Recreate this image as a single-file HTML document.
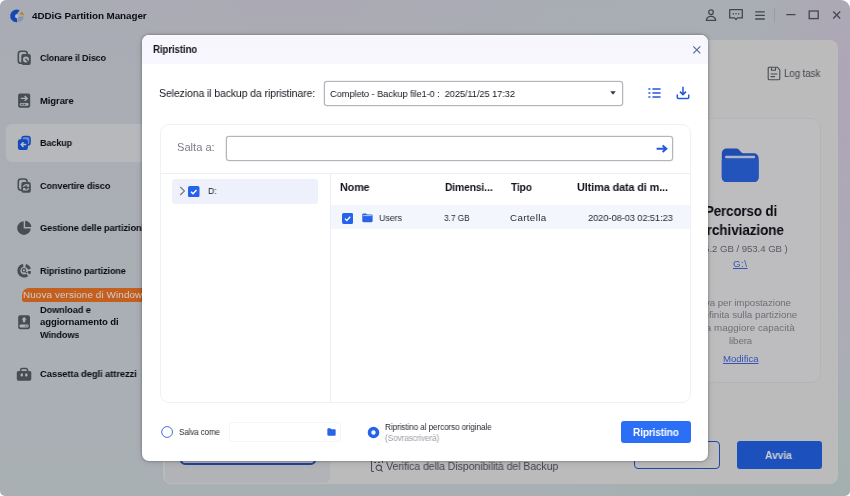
<!DOCTYPE html>
<html lang="it">
<head>
<meta charset="utf-8">
<title>4DDiG Partition Manager</title>
<style>
*{box-sizing:border-box;margin:0;padding:0}
html,body{width:850px;height:496px;overflow:hidden;background:#fff}
body{font-family:"Liberation Sans",sans-serif;color:#1c1e26;position:relative}
.abs{position:absolute}
#app{position:absolute;left:0;top:0;width:850px;height:496px;border-radius:6px 9px 5px 5px;overflow:hidden;
 background:radial-gradient(ellipse 190px 55px at 690px 8px,rgba(206,224,221,.4) 0%,rgba(206,224,221,0) 100%),radial-gradient(ellipse 280px 60px at 300px 6px,rgba(217,210,226,.45) 0%,rgba(217,210,226,0) 100%),radial-gradient(ellipse 110px 330px at 100% 22%,#dbcfe5 0%,rgba(219,207,229,0) 100%),radial-gradient(ellipse 330px 150px at 92% 100%,#ccdcdb 0%,rgba(204,220,219,0) 100%),linear-gradient(180deg,#d4d7e1 0%,#d5dae2 30%,#d4dce2 100%)}
.navsel{left:6px;top:124px;width:170px;height:37.500px;border-radius:6px;background:rgba(255,255,255,.36)}
.ico{position:absolute}
#panel{left:163px;top:40px;width:675px;height:444px;border-radius:8px;background:#eaeaec}
#lcard{left:165px;top:300px;width:165px;height:183px;border-radius:6px;background:#dfe0e4}
#rcard{left:660px;top:118px;width:161px;height:265px;border-radius:10px;background:#ededef;border:1px solid #e2e2e5}
#overlay{left:0;top:0;width:850px;height:496px;border-radius:6px 9px 5px 5px;background:rgba(0,0,0,.2)}
#modal{left:142px;top:35px;width:566px;height:425.500px;border-radius:7px;background:#fff;box-shadow:0 0 3px rgba(0,0,0,.38),0 1px 9px rgba(0,0,0,.13);overflow:hidden}
#mhead{left:0;top:0;width:567px;height:28.500px;background:linear-gradient(180deg,#fdfdff 0,#f6f6fc 2px,#f7f7fd 100%)}
.t{position:absolute;white-space:nowrap;will-change:transform}
</style>
</head>
<body>
<div id="app">
 <div class="abs navsel"></div>
 <!-- logo -->
 <svg class="ico" style="left:0;top:0" width="170" height="400" viewBox="0 0 170 400">
  <!-- logo -->
  <path d="M19.600 10.300A6.400 6.400 0 1 0 17.300 22.300L17 18.600A2.500 2.500 0 0 1 17.200 13.700z" fill="#1f58e0"/>
  <path d="M19.300 13.900 22.200 11.400 24.200 15.500z" fill="#e8a52c"/>
  <path d="M18 16.500h5.600c.1 2.200-.8 3.900-2.800 4.900l-2.800.4z" fill="#a4b4dc" opacity=".85"/>
  <circle cx="16.800" cy="16.200" r="1.500" fill="#e8eefc"/>
  <!-- clone -->
  <g fill="none" stroke="#5a606a" stroke-width="1.600">
   <rect x="18.300" y="51.300" width="9" height="12" rx="2.600"/>
  </g>
  <rect x="21.300" y="54" width="9.500" height="11" rx="2" fill="#5a606a"/>
  <circle cx="26" cy="59.400" r="3" fill="#d9dde3"/>
  <path d="M25.400 58.700l3.200 3.300" stroke="#5a606a" stroke-width="1.300"/>
  <!-- migrate -->
  <rect x="18.100" y="93.600" width="12.100" height="14.200" rx="2" fill="#5a606a"/>
  <path d="M20.800 98.400h6M24.600 96l2.600 2.400-2.600 2.400" fill="none" stroke="#d9dde3" stroke-width="1.400"/>
  <rect x="19.800" y="103" width="8.800" height="2.800" rx="1.200" fill="#d9dde3"/>
  <path d="M21.200 104.400h1.600M23.600 104.400h1.600" stroke="#5a606a" stroke-width="1.200"/>
  <!-- backup -->
  <rect x="22" y="136.500" width="8.100" height="8.400" rx="2.200" fill="#8fb0f5" stroke="#1b5aeb" stroke-width="1.500"/>
  <rect x="17.900" y="139.300" width="10" height="10.700" rx="2.200" fill="#1b5aeb"/>
  <path d="M26.300 144.600h-4.800M23.500 142.300l-2.300 2.300 2.300 2.300" fill="none" stroke="#e6eeff" stroke-width="1.500"/>
  <!-- convert -->
  <rect x="18.300" y="179" width="8.800" height="11.200" rx="2.600" fill="none" stroke="#5a606a" stroke-width="1.600"/>
  <rect x="21.300" y="182" width="9.500" height="10.800" rx="2" fill="#5a606a"/>
  <path d="M23.600 187a2.600 2.600 0 0 1 4.600-1.300M28.600 187.800a2.600 2.600 0 0 1-4.600 1.300" fill="none" stroke="#d9dde3" stroke-width="1.200"/>
  <path d="M28.600 184.300v1.900h-1.900M23.600 190.500v-1.900h1.900" fill="none" stroke="#d9dde3" stroke-width="1.100"/>
  <!-- pie -->
  <path d="M23.700 221.300A6.800 6.800 0 1 0 30.800 228.500H23.700z" fill="#5a606a"/>
  <path d="M25.100 220.800A6.400 6.400 0 0 1 31.300 227.100H25.100z" fill="#5a606a"/>
  <!-- recovery -->
  <g fill="none" stroke="#5a606a">
   <path d="M23.260 265.280A5.400 5.400 0 1 0 27.300 275.020" stroke-width="3.100"/>
   <path d="M25.600 265.380A5.400 5.400 0 0 1 29.420 269.200" stroke-width="3.100"/>
   <path d="M29.580 271.070A5.400 5.400 0 0 1 28.620 273.700" stroke-width="3.100"/>
   <circle cx="23.900" cy="270.300" r="1.700" stroke-width="1.100"/>
   <path d="M25.200 271.600l1.700 1.600" stroke-width="1.100"/>
  </g>
  <!-- download -->
  <rect x="18.200" y="315.300" width="11.800" height="14" rx="2" fill="#5a606a"/>
  <path d="M24.100 317l2.700 2.500h-1.500v2.800h-2.400v-2.800h-1.500z" fill="#d9dde3"/>
  <rect x="19.600" y="324.600" width="9" height="2.800" rx=".8" fill="#d9dde3"/>
  <path d="M25 326h.9M26.700 326h.9" stroke="#5a606a" stroke-width="1.100"/>
  <!-- toolbox -->
  <path d="M20.700 371.500v-1.600a1.400 1.400 0 0 1 1.400-1.400h4a1.400 1.400 0 0 1 1.400 1.400v1.600" fill="none" stroke="#5a606a" stroke-width="1.500"/>
  <rect x="16.800" y="371" width="14.500" height="9.700" rx="1.600" fill="#5a606a"/>
  <ellipse cx="21.800" cy="374.900" rx="1.300" ry="1.700" fill="#d9dde3"/><ellipse cx="26.300" cy="374.900" rx="1.300" ry="1.700" fill="#d9dde3"/>
 </svg>

 <!-- title bar icons -->
 <svg class="ico" style="left:704px;top:8px" width="14" height="14" viewBox="0 0 14 14" fill="none" stroke="#555962" stroke-width="1.300">
  <circle cx="7" cy="4.200" r="2.300"/><path d="M2.300 12.300c.3-2.600 2-4 4.700-4s4.400 1.400 4.700 4z" stroke-linejoin="round"/>
 </svg>
 <svg class="ico" style="left:728px;top:8px" width="16" height="14" viewBox="0 0 16 14" fill="none" stroke="#555962" stroke-width="1.300">
  <path d="M1.700 1.700h12.600v8.200H9.500L8 11.600 6.500 9.900H1.700z" stroke-linejoin="round"/>
  <path d="M4.700 5.800h1.200M7.400 5.800h1.200M10.100 5.800h1.200" stroke-width="1.500"/>
 </svg>
 <svg class="ico" style="left:754px;top:9px" width="12" height="12" viewBox="0 0 12 12" fill="none" stroke="#555962" stroke-width="1.300">
  <path d="M1.200 2.800h9.600M1.200 6.400h9.600M1.200 10h9.600"/>
 </svg>
 <div class="abs" style="left:774px;top:8px;width:1px;height:15px;background:#c2c5cc"></div>
 <svg class="ico" style="left:785px;top:9px" width="12" height="12" viewBox="0 0 12 12" fill="none" stroke="#555962" stroke-width="1.300"><path d="M1.300 5.600h9.200"/></svg>
 <svg class="ico" style="left:807px;top:8px" width="14" height="14" viewBox="0 0 14 14" fill="none" stroke="#555962" stroke-width="1.300"><rect x="2.200" y="3" width="9" height="7.600"/></svg>
 <svg class="ico" style="left:831px;top:9px" width="12" height="12" viewBox="0 0 12 12" fill="none" stroke="#555962" stroke-width="1.300"><path d="M2.200 2.500l7 7M9.200 2.500l-7 7"/></svg>

 <!-- sidebar -->







 <div class="abs" style="left:22.300px;top:287.700px;width:130px;height:14px;background:#f57726;border-radius:7px 0 0 2px"></div>



 <!-- main panel -->
 <div id="panel" class="abs"></div>
 <div id="lcard" class="abs"></div>
 <div class="abs" style="left:180px;top:430px;width:136px;height:35px;border:2px solid #2e50cc;border-radius:5px"></div>

 <svg class="ico" style="left:767px;top:66px" width="14" height="15" viewBox="0 0 14 15" fill="none" stroke="#5c6069" stroke-width="1.100">
  <path d="M1.200 2.200A1 1 0 0 1 2.200 1.200h8l2.600 2.600v9a1 1 0 0 1-1 1H2.200a1 1 0 0 1-1-1z" stroke-linejoin="round"/>
  <path d="M4.500 1.400v2.800h4V1.400M3.600 8h6.800M3.600 10.600h4.400"/>
 </svg>

 <div id="rcard" class="abs"></div>
 <svg class="ico" style="left:715px;top:142px" width="50" height="46" viewBox="715 142 50 46">
  <path d="M721.800 153.300a4.600 4.600 0 0 1 4.600-4.700h9.800a4 4 0 0 1 2.900 1.300l2.400 2.600a2.600 2.600 0 0 0 1.900.8h10.600a4.600 4.600 0 0 1 4.600 4.600v19.600a4.600 4.600 0 0 1-4.600 4.600h-27.600a4.600 4.600 0 0 1-4.600-4.600z" fill="#2660dc"/>
  <rect x="725" y="155.800" width="30.200" height="2.600" rx="1.300" fill="#d6e2fb"/>
  <path d="M721.800 160.600a2.200 2.200 0 0 1 2.200-2.200h32.400a2.200 2.200 0 0 1 2.200 2.200v16.900a4.600 4.600 0 0 1-4.600 4.600h-27.600a4.600 4.600 0 0 1-4.600-4.600z" fill="#2b69ec"/>
 </svg>

 <svg class="ico" style="left:370px;top:458px" width="14" height="15" viewBox="0 0 14 15" fill="none" stroke="#5c6069" stroke-width="1.050">
  <path d="M5 1.500H2.500a1 1 0 0 0-1 1v10a1 1 0 0 0 1 1H4M9 1.500h2.500a1 1 0 0 1 1 1V5M5 1.500h4"/>
  <path d="M4 4.500h2M8 4.500h2"/>
  <circle cx="8.800" cy="9.800" r="2.700"/><path d="M10.800 11.800l1.800 1.800"/>
 </svg>

 <div class="abs" style="left:634px;top:441px;width:86px;height:28px;border:1.400px solid #2c58ce;border-radius:4px"></div>
 <div class="abs" style="left:737px;top:441px;width:85px;height:28px;background:#2366ed;border-radius:3px"></div>
 <div class="t" style="left:31.90px;top:10.00px;font-size:9.87px;line-height:11px;font-weight:bold;color:#0d0f17;letter-spacing:-0.068px">4DDiG Partition Manager</div>
 <div class="t" style="left:39.80px;top:52.00px;font-size:9.55px;line-height:11px;font-weight:bold;color:#0d0f17;letter-spacing:-0.120px;transform:scaleX(0.9387);transform-origin:0 0">Clonare il Disco</div>
 <div class="t" style="left:39.80px;top:95.00px;font-size:9.55px;line-height:11px;font-weight:bold;color:#0d0f17;letter-spacing:-0.120px;transform:scaleX(0.9953);transform-origin:0 0">Migrare</div>
 <div class="t" style="left:39.80px;top:137.00px;font-size:9.55px;line-height:11px;font-weight:bold;color:#0d0f17;letter-spacing:-0.120px;transform:scaleX(0.9485);transform-origin:0 0">Backup</div>
 <div class="t" style="left:39.80px;top:180.00px;font-size:9.55px;line-height:11px;font-weight:bold;color:#0d0f17;letter-spacing:-0.120px;transform:scaleX(0.9565);transform-origin:0 0">Convertire disco</div>
 <div class="t" style="left:39.80px;top:222.00px;font-size:9.55px;line-height:11px;font-weight:bold;color:#0d0f17;letter-spacing:-0.120px;transform:scaleX(0.9681);transform-origin:0 0">Gestione delle partizioni</div>
 <div class="t" style="left:39.80px;top:265.00px;font-size:9.55px;line-height:11px;font-weight:bold;color:#0d0f17;letter-spacing:-0.120px;transform:scaleX(0.9556);transform-origin:0 0">Ripristino partizione</div>
 <div class="t" style="left:23.20px;top:289.00px;font-size:9.87px;line-height:11px;font-weight:normal;color:#fff;letter-spacing:0.107px">Nuova versione di Windows</div>
 <div class="t" style="left:39.80px;top:304.00px;font-size:9.55px;line-height:11px;font-weight:bold;color:#0d0f17;letter-spacing:-0.120px;transform:scaleX(0.9678);transform-origin:0 0">Download e</div>
 <div class="t" style="left:39.80px;top:316.00px;font-size:9.55px;line-height:11px;font-weight:bold;color:#0d0f17;letter-spacing:-0.096px">aggiornamento di</div>
 <div class="t" style="left:39.80px;top:329.00px;font-size:9.55px;line-height:11px;font-weight:bold;color:#0d0f17;letter-spacing:-0.120px;transform:scaleX(0.9613);transform-origin:0 0">Windows</div>
 <div class="t" style="left:39.80px;top:368.00px;font-size:9.55px;line-height:11px;font-weight:bold;color:#0d0f17;letter-spacing:-0.120px;transform:scaleX(0.9919);transform-origin:0 0">Cassetta degli attrezzi</div>
 <div class="t" style="left:784.00px;top:68.00px;font-size:10.29px;line-height:11px;font-weight:normal;color:#555962;letter-spacing:-0.120px;transform:scaleX(0.9541);transform-origin:0 0">Log task</div>
 <div class="t" style="left:704.90px;top:203.00px;font-size:14.38px;line-height:16px;font-weight:bold;color:#0d0f17;letter-spacing:-0.120px;transform:scaleX(0.9259);transform-origin:0 0">Percorso di</div>
 <div class="t" style="left:697.00px;top:222.00px;font-size:14.38px;line-height:16px;font-weight:bold;color:#0d0f17;letter-spacing:-0.120px;transform:scaleX(0.9453);transform-origin:0 0">Archiviazione</div>
 <div class="t" style="left:693.20px;top:243.00px;font-size:9.66px;line-height:11px;font-weight:normal;color:#6d7079;letter-spacing:-0.060px">( 35.2 GB / 953.4 GB )</div>
 <div class="t" style="left:733.00px;top:258.00px;font-size:9.66px;line-height:11px;font-weight:normal;color:#4668e0;letter-spacing:0.553px;text-decoration:underline">G:\</div>
 <div class="t" style="left:690.70px;top:297.00px;font-size:9.77px;line-height:11px;font-weight:normal;color:#898c93;letter-spacing:-0.070px">Salva per impostazione</div>
 <div class="t" style="left:684.10px;top:309.00px;font-size:9.77px;line-height:11px;font-weight:normal;color:#898c93;letter-spacing:-0.008px">predefinita sulla partizione</div>
 <div class="t" style="left:685.40px;top:322.00px;font-size:9.77px;line-height:11px;font-weight:normal;color:#898c93;letter-spacing:0.046px">con la maggiore capacità</div>
 <div class="t" style="left:728.80px;top:335.00px;font-size:9.77px;line-height:11px;font-weight:normal;color:#898c93;letter-spacing:-0.120px;transform:scaleX(0.9894);transform-origin:0 0">libera</div>
 <div class="t" style="left:722.60px;top:353.00px;font-size:9.66px;line-height:11px;font-weight:normal;color:#4668e0;letter-spacing:-0.055px;text-decoration:underline">Modifica</div>
 <div class="t" style="left:386.00px;top:460.00px;font-size:10.82px;line-height:12px;font-weight:normal;color:#555962;letter-spacing:-0.120px;transform:scaleX(0.9872);transform-origin:0 0">Verifica della Disponibilità del Backup</div>
 <div class="t" style="left:765.30px;top:449.00px;font-size:10.71px;line-height:12px;font-weight:bold;color:#fff;letter-spacing:-0.120px;transform:scaleX(0.9711);transform-origin:0 0">Avvia</div>
</div>

<div id="overlay" class="abs"></div>

<div id="modal" class="abs">
 <div id="mhead" class="abs"></div>
 <svg class="ico" style="left:549px;top:9px" width="12" height="12" viewBox="0 0 12 12" fill="none" stroke="#5a6a9a" stroke-width="1.200"><path d="M2.300 2.300l7 7M9.300 2.300l-7 7"/></svg>
 <div class="abs" style="left:182px;top:46px;width:299px;height:25px;border:1px solid #b4b5b9;border-radius:3px;box-shadow:0 0 0 .3px #c4c5c9;background:#fff"></div>
 <svg class="ico" style="left:468px;top:55.500px" width="6" height="4" viewBox="0 0 6 4"><path d="M.3.300h5.400L3 3.800z" fill="#33363e"/></svg>
 <svg class="ico" style="left:506px;top:52px" width="13" height="12" viewBox="0 0 13 12" fill="none" stroke="#2358dc" stroke-width="1.700">
  <path d="M.4 2h2M4.400 2h8.200M.4 6h2M4.400 6h8.200M.4 10h2M4.400 10h8.200"/>
 </svg>
 <svg class="ico" style="left:534px;top:51px" width="14" height="14" viewBox="0 0 14 14" fill="none" stroke="#2358dc" stroke-width="1.500">
  <path d="M7 .8v7.400M4 5.600l3 3 3-3" stroke-linejoin="round"/><path d="M1.300 8.500v3a1 1 0 0 0 1 1h9.400a1 1 0 0 0 1-1v-3"/>
 </svg>

 <div class="abs" style="left:17.500px;top:88.700px;width:531px;height:279.600px;border:1px solid #f0f0f7;border-radius:9px;background:#fff"></div>
 <div class="abs" style="left:84px;top:101px;width:447px;height:25px;border:1px solid #b4b5b9;border-radius:3px;box-shadow:0 0 0 .3px #c4c5c9;background:#fff"></div>
 <svg class="ico" style="left:514px;top:109px" width="12" height="10" viewBox="0 0 12 10" fill="none" stroke="#2358dc" stroke-width="1.900"><path d="M.6 4.700h9.400M6.600 1.500l3.800 3.200-3.800 3.200"/></svg>
 <div class="abs" style="left:19px;top:138px;width:529px;height:1px;background:#eeeef6"></div>
 <div class="abs" style="left:187.500px;top:139px;width:1px;height:229px;background:#eeeef6"></div>

 <div class="abs" style="left:30px;top:144px;width:146px;height:25px;border-radius:3px;background:#eef1fc"></div>
 <svg class="ico" style="left:37px;top:151px" width="7" height="10" viewBox="0 0 7 10" fill="none" stroke="#70747f" stroke-width="1.050"><path d="M1.200 1l4.300 4-4.300 4"/></svg>
 <svg class="ico" style="left:46.200px;top:150.600px" width="11.500" height="11.300" viewBox="0 0 12 12" preserveAspectRatio="none"><rect width="12" height="12" rx="1.800" fill="#2563eb"/><path d="M3.200 6.200l2 2 3.700-4" fill="none" stroke="#fff" stroke-width="1.500"/></svg>


 <div class="abs" style="left:188.500px;top:169.500px;width:359px;height:24.500px;background:#f4f6fd"></div>
 <svg class="ico" style="left:200px;top:177.700px" width="11.100" height="10.900" viewBox="0 0 12 12" preserveAspectRatio="none"><rect width="12" height="12" rx="1.800" fill="#2563eb"/><path d="M3.200 6.200l2 2 3.700-4" fill="none" stroke="#fff" stroke-width="1.500"/></svg>
 <svg class="ico" style="left:220.200px;top:178.300px" width="10.900" height="9.700" viewBox="0 0 12 11" preserveAspectRatio="none"><path d="M.3 1.800A1.300 1.300 0 0 1 1.600.500h2.800l1.400 1.300h4.600a1.300 1.300 0 0 1 1.300 1.300v6.100a1.300 1.300 0 0 1-1.300 1.300H1.600A1.300 1.300 0 0 1 .3 9.200z" fill="#2a63e6"/><rect x="1.300" y="2.600" width="9.400" height=".9" fill="#cfe0ff"/></svg>

 <svg class="ico" style="left:18px;top:390px" width="14" height="14" viewBox="0 0 14 14"><circle cx="7.100" cy="7" r="5.400" fill="#fff" stroke="#4a6be0" stroke-width="1"/></svg>
 <div class="abs" style="left:87px;top:387px;width:112px;height:20px;border:1px solid #f4f4f9;border-radius:3px;background:#fff"></div>
 <svg class="ico" style="left:185px;top:393px" width="9" height="8" viewBox="0 0 12 11"><path d="M.3 1.800A1.300 1.300 0 0 1 1.600.500h2.800l1.400 1.300h4.600a1.300 1.300 0 0 1 1.300 1.300v6.100a1.300 1.300 0 0 1-1.300 1.300H1.600A1.300 1.300 0 0 1 .3 9.200z" fill="#2a63e6"/></svg>
 <svg class="ico" style="left:225px;top:391px" width="13" height="13" viewBox="0 0 13 13"><circle cx="6.500" cy="6.500" r="4" fill="#fff" stroke="#2563eb" stroke-width="3.600"/></svg>
 <div class="abs" style="left:479px;top:386px;width:70px;height:22px;border-radius:3px;background:#2a6ff6"></div>
 <div class="t" style="left:11.00px;top:9.00px;font-size:10.29px;line-height:11px;font-weight:bold;color:#12141c;letter-spacing:-0.120px;transform:scaleX(0.9439);transform-origin:0 0">Ripristino</div>
 <div class="t" style="left:16.90px;top:52.00px;font-size:10.92px;line-height:12px;font-weight:normal;color:#15171e;letter-spacing:-0.120px;transform:scaleX(0.9643);transform-origin:0 0">Seleziona il backup da ripristinare:</div>
 <div class="t" style="left:187.50px;top:53.00px;font-size:9.87px;line-height:11px;font-weight:normal;color:#15171e;letter-spacing:-0.120px;transform:scaleX(0.9478);transform-origin:0 0">Completo - Backup file1-0 :  2025/11/25 17:32</div>
 <div class="t" style="left:35.40px;top:106.00px;font-size:11.13px;line-height:12px;font-weight:normal;color:#7b7e86;letter-spacing:-0.005px">Salta a:</div>
 <div class="t" style="left:66.20px;top:150.00px;font-size:9.45px;line-height:11px;font-weight:normal;color:#15171e;letter-spacing:-0.120px;transform:scaleX(0.9200);transform-origin:0 0">D:</div>
 <div class="t" style="left:198.00px;top:146.00px;font-size:11.03px;line-height:12px;font-weight:bold;color:#12141c;letter-spacing:-0.120px;transform:scaleX(0.9795);transform-origin:0 0">Nome</div>
 <div class="t" style="left:302.50px;top:146.00px;font-size:11.03px;line-height:12px;font-weight:bold;color:#12141c;letter-spacing:-0.120px;transform:scaleX(0.9333);transform-origin:0 0">Dimensi...</div>
 <div class="t" style="left:368.50px;top:146.00px;font-size:11.03px;line-height:12px;font-weight:bold;color:#12141c;letter-spacing:-0.120px;transform:scaleX(0.9234);transform-origin:0 0">Tipo</div>
 <div class="t" style="left:435.00px;top:146.00px;font-size:11.03px;line-height:12px;font-weight:bold;color:#12141c;letter-spacing:-0.120px;transform:scaleX(0.9887);transform-origin:0 0">Ultima data di m...</div>
 <div class="t" style="left:236.70px;top:177.00px;font-size:9.77px;line-height:11px;font-weight:normal;color:#282b33;letter-spacing:-0.120px;transform:scaleX(0.9149);transform-origin:0 0">Users</div>
 <div class="t" style="left:301.70px;top:177.00px;font-size:9.77px;line-height:11px;font-weight:normal;color:#282b33;letter-spacing:-0.120px;transform:scaleX(0.8639);transform-origin:0 0">3.7 GB</div>
 <div class="t" style="left:367.50px;top:177.00px;font-size:9.77px;line-height:11px;font-weight:normal;color:#282b33;letter-spacing:0.354px">Cartella</div>
 <div class="t" style="left:446.00px;top:177.00px;font-size:9.77px;line-height:11px;font-weight:normal;color:#282b33;letter-spacing:-0.120px;transform:scaleX(0.9593);transform-origin:0 0">2020-08-03 02:51:23</div>
 <div class="t" style="left:36.70px;top:392.00px;font-size:8.4px;line-height:10px;font-weight:normal;color:#282b33;letter-spacing:-0.120px;transform:scaleX(0.9601);transform-origin:0 0">Salva come</div>
 <div class="t" style="left:243.00px;top:387.00px;font-size:8.4px;line-height:10px;font-weight:normal;color:#282b33;letter-spacing:-0.120px;transform:scaleX(0.9792);transform-origin:0 0">Ripristino al percorso originale</div>
 <div class="t" style="left:243.00px;top:398.00px;font-size:8.4px;line-height:10px;font-weight:normal;color:#9a9da5;letter-spacing:-0.120px;transform:scaleX(0.9855);transform-origin:0 0">(Sovrascriverà)</div>
 <div class="t" style="left:491.20px;top:392.00px;font-size:10.19px;line-height:11px;font-weight:bold;color:#fff;letter-spacing:-0.120px;transform:scaleX(0.9876);transform-origin:0 0">Ripristino</div>
</div>
</body>
</html>
